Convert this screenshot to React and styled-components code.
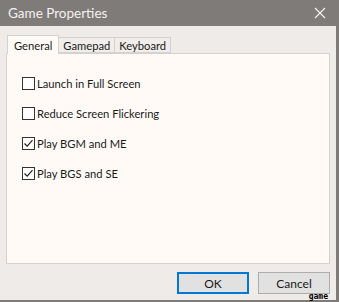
import React from 'react';
import styled, { createGlobalStyle } from 'styled-components';

const theme = {
  bg: '#efebe8',
  panel: '#fffaf6',
  title: '#7f7b79',
  border: '#d5d1ce',
  text: '#1a1a1a',
  accent: '#0078d7'
};

const GlobalStyle = createGlobalStyle`
  html, body {
    margin: 0;
    padding: 0;
    background: ${theme.bg};
  }
  body {
    font-family: "Segoe UI", Lato, "Liberation Sans", sans-serif;
    font-size: 11.2px;
    color: ${theme.text};
  }
`;

const Window = styled.div`
  width: 336px;
  height: 300px;
  display: flex;
  flex-direction: column;
  background: ${theme.bg};
  border-right: 3px solid ${theme.title};
  border-bottom: 2px solid ${theme.title};
`;

const TitleBar = styled.div`
  height: 26px;
  flex-shrink: 0;
  display: flex;
  align-items: center;
  justify-content: space-between;
  padding: 0 10px 0 8px;
  background: ${theme.title};
  color: #f4f2f0;
  font-size: 13.5px;
`;

const Body = styled.div`
  flex: 1;
  display: flex;
  flex-direction: column;
  padding: 9px 6px 8px 6px;
`;

const TabStrip = styled.div`
  display: flex;
  align-items: flex-end;
  height: 18px;
  padding-left: 1px;
  position: relative;
  z-index: 1;
`;

const Tab = styled.div`
  height: ${p => (p.active ? '19px' : '16px')};
  box-sizing: border-box;
  padding: 0 ${p => (p.active ? '6px' : '4px')};
  margin-bottom: ${p => (p.active ? '-1px' : '0')};
  display: flex;
  align-items: center;
  background: ${p => (p.active ? theme.panel : '#f0edea')};
  border: 1px solid ${theme.border};
  border-bottom: ${p => (p.active ? 'none' : `1px solid ${theme.border}`)};
  margin-left: ${p => (p.first ? '0' : '-1px')};
`;

const Panel = styled.div`
  height: 211px;
  box-sizing: border-box;
  background: ${theme.panel};
  border: 1px solid ${theme.border};
  display: flex;
  flex-direction: column;
  gap: 17px;
  padding: 23px 0 0 15px;
`;

const Row = styled.label`
  display: flex;
  align-items: center;
  gap: 2px;
  height: 13px;
`;

const Box = styled.span`
  width: 13px;
  height: 13px;
  box-sizing: border-box;
  border: 1px solid #333;
  background: #fff;
  display: flex;
  align-items: center;
  justify-content: center;
`;

const Footer = styled.div`
  margin-top: 8px;
  display: flex;
  justify-content: flex-end;
  gap: 9px;
  position: relative;
`;

const Button = styled.div`
  width: 72px;
  height: 22px;
  box-sizing: border-box;
  display: flex;
  align-items: center;
  justify-content: center;
  font-size: 12px;
  background: #e1e1e1;
  border: ${p => (p.primary ? `2px solid ${theme.accent}` : '1px solid #adadad')};
`;

const Tag = styled.span`
  position: absolute;
  right: 2px;
  bottom: -7px;
  font-size: 8px;
  font-weight: bold;
  line-height: 8px;
  font-family: "DejaVu Sans Mono", monospace;
  color: #000;
`;

const options = [
  { label: 'Launch in Full Screen', checked: false },
  { label: 'Reduce Screen Flickering', checked: false },
  { label: 'Play BGM and ME', checked: true },
  { label: 'Play BGS and SE', checked: true }
];

function Check({ checked }) {
  return (
    <Box>
      {checked && (
        <svg width="11" height="11" viewBox="0 0 11 11">
          <path d="M1.5 5.5 L4.2 8.2 L9.5 2.2" fill="none" stroke="#222" strokeWidth="1.2" />
        </svg>
      )}
    </Box>
  );
}

export default function App() {
  return (
    <>
      <GlobalStyle />
      <Window>
        <TitleBar>
          <span>Game Properties</span>
          <svg width="12" height="12" viewBox="0 0 12 12">
            <path d="M1 1 L11 11 M11 1 L1 11" stroke="#f4f2f0" strokeWidth="1.2" />
          </svg>
        </TitleBar>
        <Body>
          <TabStrip>
            <Tab active first>General</Tab>
            <Tab>Gamepad</Tab>
            <Tab>Keyboard</Tab>
          </TabStrip>
          <Panel>
            {options.map(o => (
              <Row key={o.label}>
                <Check checked={o.checked} />
                <span>{o.label}</span>
              </Row>
            ))}
          </Panel>
          <Footer>
            <Button primary>OK</Button>
            <Button>Cancel</Button>
            <Tag>game</Tag>
          </Footer>
        </Body>
      </Window>
    </>
  );
}
